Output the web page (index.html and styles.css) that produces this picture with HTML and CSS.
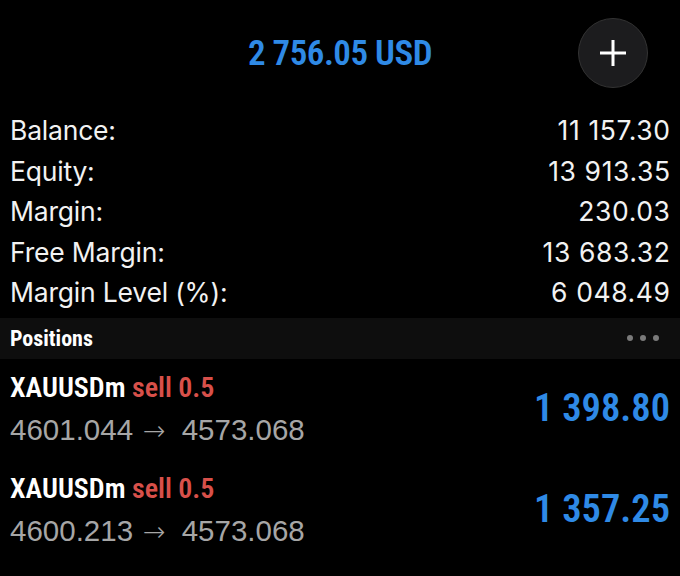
FILE: index.html
```html
<!DOCTYPE html>
<html>
<head>
<meta charset="utf-8">
<link rel="stylesheet" href="styles.css">
</head>
<body>
<div class="screen">
  <header class="top">
    <div class="spacer"></div>
    <div class="equity-title">2 756.05 USD</div>
    <div class="btn-wrap">
      <button class="add-btn" aria-label="Add">
        <svg width="32" height="32" viewBox="0 0 32 32"><path d="M16 3 V29 M3 16 H29" stroke="#fff" stroke-width="3" stroke-linecap="butt" fill="none"/></svg>
      </button>
    </div>
  </header>

  <section class="summary">
    <div class="row"><span class="label">Balance:</span><span class="value">11 157.30</span></div>
    <div class="row"><span class="label">Equity:</span><span class="value">13 913.35</span></div>
    <div class="row"><span class="label">Margin:</span><span class="value">230.03</span></div>
    <div class="row"><span class="label">Free Margin:</span><span class="value">13 683.32</span></div>
    <div class="row"><span class="label">Margin Level (%):</span><span class="value">6 048.49</span></div>
  </section>

  <div class="section-head">
    <span class="section-title">Positions</span>
    <span class="dots"><i></i><i></i><i></i></span>
  </div>

  <div class="position">
    <div class="pos-left">
      <div class="pos-title">XAUUSDm <span class="sell">sell 0.5</span></div>
      <div class="pos-price">4601.044<span class="arrow">→</span>4573.068</div>
    </div>
    <div class="pos-profit">1 398.80</div>
  </div>

  <div class="position">
    <div class="pos-left">
      <div class="pos-title">XAUUSDm <span class="sell">sell 0.5</span></div>
      <div class="pos-price">4600.213<span class="arrow">→</span>4573.068</div>
    </div>
    <div class="pos-profit">1 357.25</div>
  </div>
</div>
</body>
</html>
```

FILE: styles.css
```css
html, body {
  margin: 0;
  padding: 0;
  background: #000;
}
.screen {
  width: 680px;
  height: 576px;
  background: #000;
  color: #fff;
  font-family: Inter, "Liberation Sans", sans-serif;
  overflow: hidden;
}
.top {
  display: grid;
  grid-template-columns: 1fr auto 1fr;
  align-items: center;
  height: 110px;
  box-sizing: border-box;
  padding-bottom: 4px;
}
.equity-title {
  font-family: "Roboto Condensed", "Liberation Sans Narrow", "DejaVu Sans Condensed", sans-serif;
  font-stretch: condensed;
  font-weight: 600;
  font-size: 35px;
  color: #2f8ae6;
  letter-spacing: -0.5px;
}
.btn-wrap {
  display: flex;
  justify-content: flex-end;
  padding-right: 32px;
}
.add-btn {
  width: 70px;
  height: 70px;
  border-radius: 50%;
  background: #1c1c1e;
  border: 1px solid #333;
  display: flex;
  align-items: center;
  justify-content: center;
  padding: 0;
}
.summary {
  padding: 0 10px;
}
.row {
  display: flex;
  justify-content: space-between;
  align-items: center;
  height: 40.5px;
  font-size: 26.5px;
  color: #f2f2f2;
}
.label {
  letter-spacing: -0.2px;
}
.value {
  letter-spacing: 0.6px;
  margin-right: -0.6px;
}
.section-head {
  margin-top: 5px;
  height: 41px;
  background: #0e0e0e;
  display: flex;
  align-items: center;
  justify-content: space-between;
  padding: 0 21px 0 10px;
}
.section-title {
  font-family: "Roboto Condensed", "Liberation Sans Narrow", "DejaVu Sans Condensed", sans-serif;
  font-stretch: condensed;
  font-weight: 700;
  font-size: 22px;
  color: #fff;
}
.dots {
  display: flex;
  gap: 7px;
}
.dots i {
  width: 6px;
  height: 6px;
  border-radius: 50%;
  background: #7a7a7a;
}
.position {
  height: 101px;
  box-sizing: border-box;
  padding: 8px 10px 9px 10px;
  display: flex;
  justify-content: space-between;
  align-items: center;
}
.pos-left {
  display: flex;
  flex-direction: column;
}
.pos-title {
  height: 42px;
  line-height: 42px;
  font-family: "Roboto Condensed", "Liberation Sans Narrow", "DejaVu Sans Condensed", sans-serif;
  font-stretch: condensed;
  font-weight: 600;
  font-size: 28px;
  color: #fff;
}
.sell {
  color: #d8504a;
}
.pos-price {
  height: 42px;
  line-height: 42px;
  font-family: "Liberation Sans", Arial, sans-serif;
  font-size: 29.5px;
  color: #a6a6a6;
  white-space: nowrap;
}
.arrow {
  display: inline-block;
  font-family: "DejaVu Sans", sans-serif;
  font-weight: 200;
  font-size: 27px;
  margin: 0 16px 0 10px;
}
.pos-profit {
  font-family: "Roboto Condensed", "Liberation Sans Narrow", "DejaVu Sans Condensed", sans-serif;
  font-stretch: condensed;
  font-weight: 600;
  font-size: 38.5px;
  color: #2f8ae6;
  margin-top: -3px;
}
```
